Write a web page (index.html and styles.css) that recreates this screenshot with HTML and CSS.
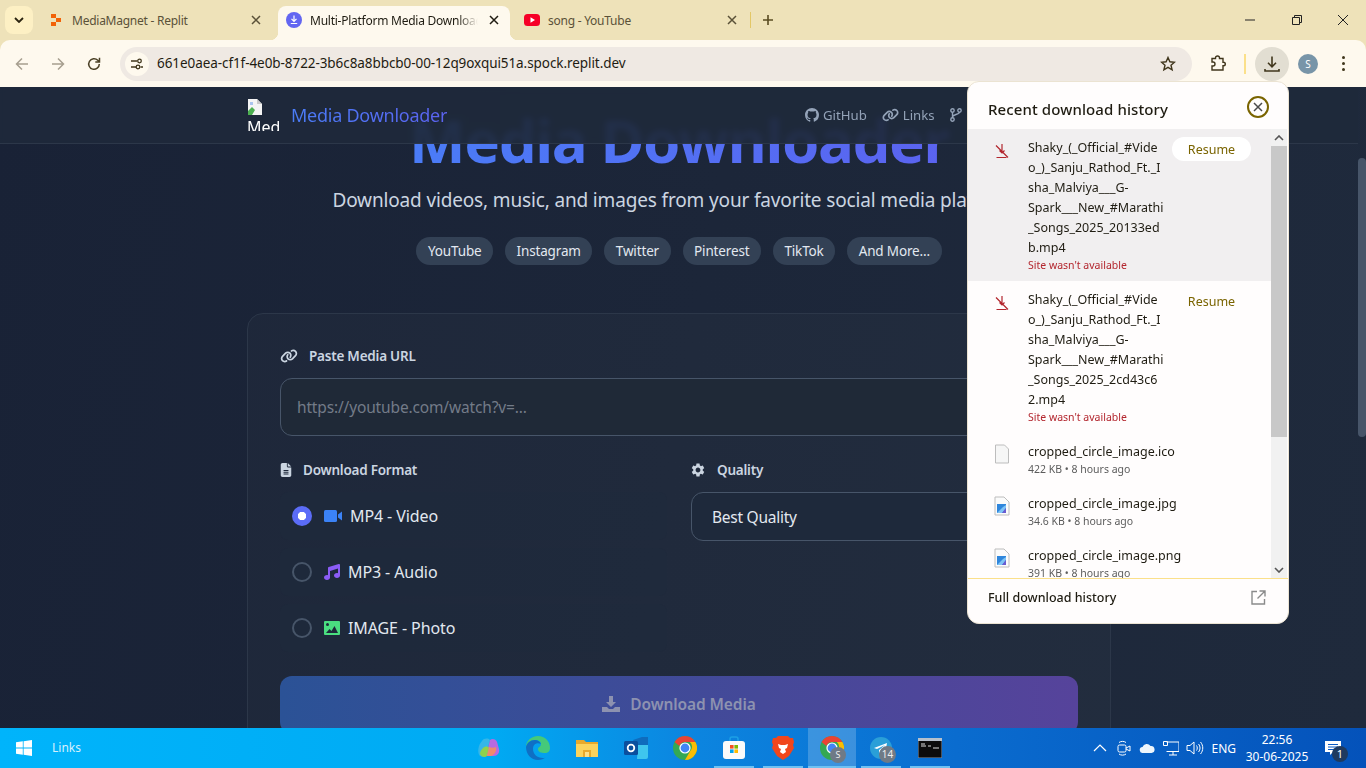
FILE: index.html
```html
<!DOCTYPE html>
<html>
<head>
    <title>Multi-Platform Media Downloader</title>
    <link rel="stylesheet" href="styles.css">
</head>
<body>
    <svg class="sprite" xmlns="http://www.w3.org/2000/svg">
        <symbol id="i-chrome" viewBox="0 0 24 24">
            <circle cx="12" cy="12" r="12" fill="#34a853"/>
            <path d="M12 0a12 12 0 0 1 10.4 6H12a6 6 0 0 0-5.6 3.9L1.6 6A12 12 0 0 1 12 0z" fill="#ea4335"/>
            <path d="M22.4 6A12 12 0 0 1 12 24l5.2-9a6 6 0 0 0-.4-9z" fill="#fbbc04"/>
            <circle cx="12" cy="12" r="5.6" fill="#fff"/>
            <circle cx="12" cy="12" r="4.4" fill="#4285f4"/>
        </symbol>
        <symbol id="i-failed" viewBox="0 0 16 16">
            <path d="M8 1v9M5.5 7.5 8 10l2.500-2.500M2.500 14.500h10M2 2.500l12 12" fill="none" stroke="#b3262e" stroke-width="1.200"/>
        </symbol>
        <symbol id="i-picfile" viewBox="0 0 16 20">
            <path d="M1 1h9l5 5v13H1z" fill="#fbfbfb" stroke="#bdbdbd"/>
            <path d="M3 8h9v9H3z" fill="#2f86dc"/>
            <path d="M3 17l6-6 3-2v3l-4 5z" fill="#7fc3f5"/>
            <path d="M8 17l4-5v5z" fill="#6a5bd0"/>
        </symbol>
        <symbol id="i-close" viewBox="0 0 12 12">
            <path d="M2 2l8 8M10 2l-8 8" fill="none" stroke="currentColor" stroke-width="1.500"/>
        </symbol>
    </svg>

    <div class="tabstrip">
        <div class="tablist-btn">
            <svg width="10" height="6" viewBox="0 0 10 6"><path d="M1 1l4 4 4-4" fill="none" stroke="#2b2410" stroke-width="1.800"/></svg>
        </div>
        <div class="tabs">
            <div class="tab">
                <svg class="favicon" viewBox="0 0 16 16"><path d="M3 2h5v4H3zM8 6h5v4H8zM3 10h5v4H3z" fill="#f26207"/></svg>
                <span class="tab-title">MediaMagnet - Replit</span>
                <svg class="tab-x"><use href="#i-close"/></svg>
            </div>
            <div class="tab tab-active">
                <svg class="favicon" viewBox="0 0 16 16"><circle cx="8" cy="8" r="8" fill="#6366f1"/><path d="M8 3.500v5.500M5.500 6.800 8 9.300l2.500-2.500M4.800 11.500h6.400" fill="none" stroke="#fff" stroke-width="1.200"/></svg>
                <span class="tab-title">Multi-Platform Media Downloader</span>
                <svg class="tab-x"><use href="#i-close"/></svg>
            </div>
            <div class="tab">
                <svg class="favicon" viewBox="0 0 16 16"><rect y="2" width="16" height="12" rx="3.500" fill="#f60026"/><path d="M6.500 5.200v5.600L11 8z" fill="#fff"/></svg>
                <span class="tab-title">song - YouTube</span>
                <svg class="tab-x"><use href="#i-close"/></svg>
            </div>
        </div>
        <div class="tab-sep"></div>
        <svg class="new-tab" viewBox="0 0 12 12"><path d="M6 1v10M1 6h10" fill="none" stroke="#5a4c22" stroke-width="1.600"/></svg>
        <div class="win-controls">
            <svg viewBox="0 0 12 12"><path d="M1 6h10" stroke="#222" fill="none"/></svg>
            <svg viewBox="0 0 12 12"><path d="M1.500 3.500h7v7h-7zM3.500 3.500v-2h7v7h-2" stroke="#222" fill="none"/></svg>
            <svg viewBox="0 0 12 12"><path d="M1 1l10 10M11 1 1 11" stroke="#222" fill="none"/></svg>
        </div>
    </div>

    <div class="toolbar">
        <div class="tool-btn">
            <svg width="16" height="16" viewBox="0 0 16 16"><path d="M14 8H2.500M8 2.500 2.500 8 8 13.500" fill="none" stroke="#a79f8f" stroke-width="1.500"/></svg>
        </div>
        <div class="tool-btn">
            <svg width="16" height="16" viewBox="0 0 16 16"><path d="M2 8h11.500M8 2.500 13.500 8 8 13.500" fill="none" stroke="#a79f8f" stroke-width="1.500"/></svg>
        </div>
        <div class="tool-btn">
            <svg width="16" height="16" viewBox="0 0 16 16"><path d="M13.300 8a5.300 5.300 0 1 1-1.500-3.700L13.500 6M13.500 1.800V6H9.300" fill="none" stroke="#4b4126" stroke-width="1.500"/></svg>
        </div>
        <div class="omnibox">
            <div class="site-chip">
                <svg width="14" height="14" viewBox="0 0 14 14"><path d="M1 4h6M10.500 10H13M1 10h5" stroke="#40361c" stroke-width="1.300" fill="none"/><circle cx="9.500" cy="4" r="1.800" fill="none" stroke="#40361c" stroke-width="1.300"/><circle cx="8" cy="10" r="1.800" fill="none" stroke="#40361c" stroke-width="1.300"/></svg>
            </div>
            <span class="url">661e0aea-cf1f-4e0b-8722-3b6c8a8bbcb0-00-12q9oxqui51a.spock.replit.dev</span>
            <svg class="star" width="16" height="16" viewBox="0 0 16 16"><path d="M8 1.500l1.900 4.300 4.600.4-3.500 3 1.100 4.600L8 11.400l-4.100 2.400L5 9.200l-3.500-3 4.600-.4z" fill="none" stroke="#40361c" stroke-width="1.400"/></svg>
        </div>
        <div class="tool-btn ext-btn">
            <svg width="18" height="18" viewBox="0 0 18 18"><path d="M3 3.500h3.500V3a2 2 0 0 1 4 0v.5H14v3.700h.5a1.800 1.800 0 0 1 0 3.600H14v4.200H3v-4h1a2 2 0 0 0 0-4H3z" fill="none" stroke="#40361c" stroke-width="1.400"/></svg>
        </div>
        <div class="tool-sep"></div>
        <div class="dl-btn">
            <svg width="18" height="18" viewBox="0 0 18 18"><path d="M9 1.500v10M5 7.800 9 11.800l4-4M2 14v2h14v-2" fill="none" stroke="#40361c" stroke-width="1.600"/></svg>
        </div>
        <div class="avatar">S</div>
        <div class="dots"><i></i><i></i><i></i></div>
    </div>

    <div class="viewport">
        <div class="page">
            <div class="hero">
                <h1>Media Downloader</h1>
                <p class="subtitle">Download videos, music, and images from your favorite social media platforms</p>
                <div class="pills">
                    <span class="pill">YouTube</span>
                    <span class="pill">Instagram</span>
                    <span class="pill">Twitter</span>
                    <span class="pill">Pinterest</span>
                    <span class="pill">TikTok</span>
                    <span class="pill">And More...</span>
                </div>
            </div>

            <div class="card">
                <label class="field-label">
                    <svg class="lbl-icon lbl-icon-link" width="18" height="14" viewBox="0 0 640 512"><path d="M579.8 267.7c56.5-56.5 56.5-148 0-204.5c-50-50-128.8-56.5-186.3-15.4l-1.6 1.1c-14.4 10.3-17.7 30.3-7.4 44.6s30.3 17.7 44.6 7.4l1.6-1.1c32.1-22.9 76-19.3 103.8 8.6c31.5 31.5 31.5 82.5 0 114L422.3 334.8c-31.5 31.5-82.5 31.5-114 0c-27.9-27.9-31.5-71.8-8.6-103.8l1.1-1.6c10.3-14.4 6.9-34.4-7.4-44.6s-34.4-6.9-44.6 7.4l-1.1 1.6C206.5 251.2 213 330 263 380c56.5 56.5 148 56.5 204.5 0L579.8 267.7zM60.2 244.3c-56.5 56.5-56.5 148 0 204.5c50 50 128.8 56.5 186.3 15.4l1.6-1.1c14.4-10.3 17.7-30.3 7.4-44.6s-30.3-17.7-44.6-7.4l-1.6 1.1c-32.1 22.9-76 19.3-103.8-8.6C74 372 74 321 105.5 289.5L217.7 177.2c31.5-31.5 82.5-31.5 114 0c27.9 27.9 31.5 71.8 8.6 103.9l-1.1 1.6c-10.3 14.4-6.9 34.4 7.4 44.6s34.4 6.9 44.6-7.4l1.1-1.6C433.5 260.8 427 182 377 132c-56.5-56.5-148-56.5-204.5 0L60.2 244.3z" fill="#cbd5e1"/></svg>
                    Paste Media URL
                </label>
                <div class="url-input">https://youtube.com/watch?v=...</div>

                <div class="form-grid">
                    <div>
                        <label class="field-label">
                            <svg class="lbl-icon lbl-icon-file" width="12" height="14" viewBox="0 0 384 512"><path d="M64 0C28.7 0 0 28.7 0 64V448c0 35.3 28.7 64 64 64H320c35.3 0 64-28.7 64-64V160H256c-17.7 0-32-14.3-32-32V0H64zM256 0V128H384L256 0zM112 256H272c8.8 0 16 7.2 16 16s-7.2 16-16 16H112c-8.8 0-16-7.2-16-16s7.2-16 16-16zm0 64H272c8.8 0 16 7.2 16 16s-7.2 16-16 16H112c-8.8 0-16-7.2-16-16s7.2-16 16-16zm0 64H272c8.8 0 16 7.2 16 16s-7.2 16-16 16H112c-8.8 0-16-7.2-16-16s7.2-16 16-16z" fill="#cbd5e1"/></svg>
                            Download Format
                        </label>
                        <div class="options">
                            <div class="option">
                                <span class="radio radio-on"></span>
                                <svg class="opt-icon" width="18" height="14" viewBox="0 0 18 14"><rect y="1" width="13" height="12" rx="1.500" fill="#3b82f6"/><path d="M14 5.500 18 2.500v9l-4-3z" fill="#3b82f6"/></svg>
                                <span>MP4 - Video</span>
                            </div>
                            <div class="option">
                                <span class="radio"></span>
                                <svg class="opt-icon" width="16" height="16" viewBox="0 0 512 512"><path d="M499.1 6.3c8.1 6 12.9 15.6 12.9 25.7v72V368c0 44.2-43 80-96 80s-96-35.8-96-80s43-80 96-80c11.2 0 22 1.6 32 4.6V147L192 223.8V432c0 44.2-43 80-96 80s-96-35.8-96-80s43-80 96-80c11.2 0 22 1.6 32 4.6V200 128c0-14.1 9.3-26.6 22.8-30.7l320-96c9.7-2.9 20.2-1.1 28.3 4.9z" fill="#8b5cf6"/></svg>
                                <span>MP3 - Audio</span>
                            </div>
                            <div class="option">
                                <span class="radio"></span>
                                <svg class="opt-icon" width="16" height="14" viewBox="0 0 16 14"><rect width="16" height="14" rx="1" fill="#4ade80"/><circle cx="3.500" cy="3.500" r="1.500" fill="#1e293b"/><path d="M2 12l3.500-4 2 2 3-5 3.500 7z" fill="#1e293b"/></svg>
                                <span>IMAGE - Photo</span>
                            </div>
                        </div>
                    </div>
                    <div>
                        <label class="field-label">
                            <svg class="lbl-icon lbl-icon-gear" width="16" height="16" viewBox="0 0 24 24"><path d="M19.14 12.94c.04-.3.06-.61.06-.94 0-.32-.02-.64-.07-.94l2.03-1.58a.49.49 0 00.12-.61l-1.92-3.32a.488.488 0 00-.59-.22l-2.39.96c-.5-.38-1.03-.7-1.62-.94l-.36-2.54a.484.484 0 00-.48-.41h-3.84c-.24 0-.43.17-.47.41l-.36 2.54c-.59.24-1.13.57-1.62.94l-2.39-.96c-.22-.08-.47 0-.59.22L2.74 8.87c-.12.21-.08.47.12.61l2.03 1.58c-.05.3-.09.63-.09.94s.02.64.07.94l-2.03 1.58a.49.49 0 00-.12.61l1.92 3.32c.12.22.37.29.59.22l2.39-.96c.5.38 1.03.7 1.62.94l.36 2.54c.05.24.24.41.48.41h3.84c.24 0 .44-.17.47-.41l.36-2.54c.59-.24 1.13-.56 1.62-.94l2.39.96c.22.08.47 0 .59-.22l1.92-3.32c.12-.22.07-.47-.12-.61l-2.01-1.58zM12 15.6c-1.98 0-3.6-1.62-3.6-3.6s1.62-3.6 3.6-3.6 3.6 1.62 3.6 3.6-1.62 3.6-3.6 3.6z" fill="#cbd5e1"/></svg>
                            Quality
                        </label>
                        <div class="select">Best Quality</div>
                    </div>
                </div>

                <div class="submit">
                    <svg width="18" height="16" viewBox="0 0 18 16"><path d="M7 0h4v6h3l-5 5-5-5h3z" fill="#8d92b0"/><path d="M0 11h5l2 2h4l2-2h5v5H0z" fill="#8d92b0"/></svg>
                    Download Media
                </div>
            </div>
        </div>
        <div class="page-scroll"><div class="page-thumb"></div></div>

        <nav class="topnav">
            <div class="topnav-inner">
                <div class="broken-img">
                    <svg width="16" height="16" viewBox="0 0 16 16"><path d="M1 0h9l5 5v11H1z" fill="#f4f4f4"/><path d="M10 0v5h5z" fill="#c8c8c8"/><path d="M1 16V12l4-4 3 3-3 5z" fill="#4caf50"/><path d="M3 3h3v3H3z" fill="#aac4ee"/></svg>
                    <span>Media Downloader</span>
                </div>
                <span class="brand">Media Downloader</span>
                <div class="nav-links">
                    <a>
                        <svg width="14" height="14" viewBox="0 0 16 16"><path d="M8 0C3.58 0 0 3.58 0 8c0 3.54 2.29 6.53 5.47 7.59.4.07.55-.17.55-.38 0-.19-.01-.82-.01-1.49-2.01.37-2.53-.49-2.69-.94-.09-.23-.48-.94-.82-1.13-.28-.15-.68-.52-.01-.53.63-.01 1.08.58 1.23.82.72 1.21 1.87.87 2.33.66.07-.52.28-.87.51-1.07-1.78-.2-3.64-.89-3.64-3.95 0-.87.31-1.59.82-2.15-.08-.2-.36-1.02.08-2.12 0 0 .67-.21 2.2.82.64-.18 1.32-.27 2-.27.68 0 1.36.09 2 .27 1.53-1.04 2.2-.82 2.2-.82.44 1.1.16 1.92.08 2.12.51.56.82 1.27.82 2.15 0 3.07-1.87 3.75-3.65 3.95.29.25.54.73.54 1.48 0 1.07-.01 1.93-.01 2.2 0 .21.15.46.55.38A8.013 8.013 0 0016 8c0-4.42-3.58-8-8-8z" fill="#94a3b8"/></svg>
                        GitHub
                    </a>
                    <a>
                        <svg width="17" height="14" viewBox="0 0 640 512"><path d="M579.8 267.7c56.5-56.5 56.5-148 0-204.5c-50-50-128.8-56.5-186.3-15.4l-1.6 1.1c-14.4 10.3-17.7 30.3-7.4 44.6s30.3 17.7 44.6 7.4l1.6-1.1c32.1-22.9 76-19.3 103.8 8.6c31.5 31.5 31.5 82.5 0 114L422.3 334.8c-31.5 31.5-82.5 31.5-114 0c-27.9-27.9-31.5-71.8-8.6-103.8l1.1-1.6c10.3-14.4 6.9-34.4-7.4-44.6s-34.4-6.9-44.6 7.4l-1.1 1.6C206.5 251.2 213 330 263 380c56.5 56.5 148 56.5 204.5 0L579.8 267.7zM60.2 244.3c-56.5 56.5-56.5 148 0 204.5c50 50 128.8 56.5 186.3 15.4l1.6-1.1c14.4-10.3 17.7-30.3 7.4-44.6s-30.3-17.7-44.6-7.4l-1.6 1.1c-32.1 22.9-76 19.3-103.8-8.6C74 372 74 321 105.5 289.5L217.7 177.2c31.5-31.5 82.5-31.5 114 0c27.9 27.9 31.5 71.8 8.6 103.9l-1.1 1.6c-10.3 14.4-6.9 34.4 7.4 44.6s34.4 6.9 44.6-7.4l1.1-1.6C433.5 260.8 427 182 377 132c-56.5-56.5-148-56.5-204.5 0L60.2 244.3z" fill="#94a3b8"/></svg>
                        Links
                    </a>
                    <a>
                        <svg width="12" height="14" viewBox="0 0 12 14"><circle cx="2.500" cy="2.500" r="1.700" fill="none" stroke="#94a3b8" stroke-width="1.400"/><circle cx="9.500" cy="2.500" r="1.700" fill="none" stroke="#94a3b8" stroke-width="1.400"/><circle cx="2.500" cy="11.500" r="1.700" fill="none" stroke="#94a3b8" stroke-width="1.400"/><path d="M2.500 4v6M9.500 4c0 3-7 2-7 5" fill="none" stroke="#94a3b8" stroke-width="1.400"/></svg>
                    </a>
                </div>
            </div>
        </nav>
    </div>

    <div class="dl-popup">
        <div class="popup-head">
            <span>Recent download history</span>
            <div class="popup-close"><svg width="12" height="12"><use href="#i-close"/></svg></div>
        </div>
        <div class="popup-body">
            <div class="dl-list">
                <div class="dl-item dl-item-hover">
                    <svg class="dl-icon" width="16" height="16"><use href="#i-failed"/></svg>
                    <div class="dl-text">
                        <div class="dl-name">Shaky_(_Official_#Vide<br>o_)_Sanju_Rathod_Ft._I<br>sha_Malviya___G-<br>Spark___New_#Marathi<br>_Songs_2025_20133ed<br>b.mp4</div>
                        <div class="dl-status">Site wasn't available</div>
                    </div>
                    <span class="resume resume-pill">Resume</span>
                </div>
                <div class="dl-item">
                    <svg class="dl-icon" width="16" height="16"><use href="#i-failed"/></svg>
                    <div class="dl-text">
                        <div class="dl-name">Shaky_(_Official_#Vide<br>o_)_Sanju_Rathod_Ft._I<br>sha_Malviya___G-<br>Spark___New_#Marathi<br>_Songs_2025_2cd43c6<br>2.mp4</div>
                        <div class="dl-status">Site wasn't available</div>
                    </div>
                    <span class="resume">Resume</span>
                </div>
                <div class="dl-item dl-file">
                    <svg class="dl-icon" width="16" height="20" viewBox="0 0 16 20"><path d="M1.500 1h9l4 4v14h-13z" fill="#f6f6f6" stroke="#bdbdbd"/></svg>
                    <div class="dl-text">
                        <div class="dl-name">cropped_circle_image.ico</div>
                        <div class="dl-meta">422 KB • 8 hours ago</div>
                    </div>
                </div>
                <div class="dl-item dl-file">
                    <svg class="dl-icon" width="16" height="20"><use href="#i-picfile"/></svg>
                    <div class="dl-text">
                        <div class="dl-name">cropped_circle_image.jpg</div>
                        <div class="dl-meta">34.6 KB • 8 hours ago</div>
                    </div>
                </div>
                <div class="dl-item dl-file">
                    <svg class="dl-icon" width="16" height="20"><use href="#i-picfile"/></svg>
                    <div class="dl-text">
                        <div class="dl-name">cropped_circle_image.png</div>
                        <div class="dl-meta">391 KB • 8 hours ago</div>
                    </div>
                </div>
            </div>
            <div class="popup-scroll">
                <div class="scroll-arrow"><svg width="10" height="6" viewBox="0 0 10 6"><path d="M1 5l4-4 4 4" fill="none" stroke="#555" stroke-width="1.600"/></svg></div>
                <div class="scroll-thumb"></div>
                <div class="scroll-rest"></div>
                <div class="scroll-arrow"><svg width="10" height="6" viewBox="0 0 10 6"><path d="M1 1l4 4 4-4" fill="none" stroke="#555" stroke-width="1.600"/></svg></div>
            </div>
        </div>
        <div class="popup-foot">
            <span>Full download history</span>
            <svg width="15" height="15" viewBox="0 0 15 15"><path d="M6 1.500H1v12.500h12.500V9M8.500 1h5.500v5.500M14 1 6.500 8.500" fill="none" stroke="#8a8a8a" stroke-width="1.400"/></svg>
        </div>
    </div>

    <div class="taskbar">
        <svg class="win-logo" width="16" height="16" viewBox="0 0 16 16"><path d="M0 2.300 6.800 1.300v6.300H0zM7.600 1.200 16 0v7.600H7.600zM0 8.400h6.800v6.300L0 13.700zM7.600 8.400H16V16l-8.400-1.200z" fill="#fff"/></svg>
        <span class="task-links">Links</span>
        <div class="task-icons">
            <div class="task-app">
                <svg width="24" height="24" viewBox="0 0 24 24"><path d="M5 5c2-3 6-3 8-1l-4 15c-1 2-4 2-6 1-3-3-2-11 2-15z" fill="#35b6e8"/><path d="M13 4c2-2 6-1 7 2l2 7c1 4-2 7-5 7H9l4-16z" fill="#b86ae0"/><path d="M6 12c2-2 5-2 6 0l-2 8c-2 2-6 1-7-2 0-2 1-4 3-6z" fill="#8fd14f"/><path d="M12 11c2 1 5 1 7 0 1 3-1 8-5 9h-4z" fill="#f08a6c"/></svg>
            </div>
            <div class="task-app">
                <svg width="24" height="24" viewBox="0 0 24 24"><path d="M12 0c7 0 12 5 12 12 0 3-2 5-5 5-4 0-7-1-7-4 0-2 3-2 3-5 0-2-2-4-6-4C4 4 1 7 0 11 0 5 5 0 12 0z" fill="#45c97a"/><path d="M0 11c1-4 4-7 9-7 3 0 5 2 6 4-4-2-8 0-8 5 0 5 4 9 10 9 1 0 2 0 3-1-2 2-5 3-8 3C5 24 0 18 0 11z" fill="#0f6fc4"/></svg>
            </div>
            <div class="task-app">
                <svg width="22" height="18" viewBox="0 0 22 18"><path d="M0 1h8l2 2h12v15H0z" fill="#e8a92c"/><path d="M0 5h22v13H0z" fill="#fbd35c"/><path d="M7 11h8v7H7z" fill="#e8a92c"/><path d="M9 13h4v5H9z" fill="#fbe08a"/></svg>
            </div>
            <div class="task-app">
                <svg width="24" height="22" viewBox="0 0 24 22"><path d="M9 3l9-3h6v14h-9z" fill="#0f6cbd"/><path d="M14 8h10v12a2 2 0 0 1-2 2H13z" fill="#3fc6ee"/><rect y="4" width="14" height="14" rx="1.500" fill="#0b4f9e"/><circle cx="7" cy="11" r="3.300" fill="none" stroke="#fff" stroke-width="1.800"/></svg>
            </div>
            <div class="task-app">
                <svg width="24" height="24"><use href="#i-chrome"/></svg>
            </div>
            <div class="task-app task-open">
                <svg width="24" height="24" viewBox="0 0 24 24"><path d="M8 6V3a2 2 0 0 1 2-2h4a2 2 0 0 1 2 2v3" fill="none" stroke="#1ca0e6" stroke-width="1.500"/><rect x="1" y="5" width="22" height="18" rx="3" fill="#fafafa"/><path d="M8 9h3.600v3.600H8z" fill="#f25022"/><path d="M12.400 9H16v3.600h-3.600z" fill="#7fba00"/><path d="M8 13.400h3.600V17H8z" fill="#00a4ef"/><path d="M12.400 13.400H16V17h-3.600z" fill="#ffb900"/></svg>
            </div>
            <div class="task-app task-open">
                <svg width="22" height="24" viewBox="0 0 22 24"><path d="M6 0h10l2 2 3 0 1 4-1 3 1 3-5 8-6 4-6-4-5-8 1-3-1-3 1-4 3 0z" fill="#f1461c"/><path d="M6 8l3 1h4l3-1-1 4-2 1 1 3-3 2-3-2 1-3-2-1z" fill="#fff"/></svg>
            </div>
            <div class="task-app task-open task-active">
                <svg width="24" height="24"><use href="#i-chrome"/></svg>
                <span class="task-badge">S</span>
            </div>
            <div class="task-app task-open">
                <svg width="22" height="22" viewBox="0 0 22 22"><circle cx="11" cy="11" r="11" fill="#2a9fd8"/><path d="M4 11l13-5-2 11-4-3-2 2v-3l6-5-8 4z" fill="#fff"/></svg>
                <span class="task-badge task-badge-num">14</span>
            </div>
            <div class="task-app task-open">
                <svg width="24" height="20" viewBox="0 0 24 20"><rect width="24" height="20" fill="#0c0c0c" stroke="#8a97a8"/><rect width="24" height="3" fill="#b6c0cc"/><path d="M3 6h4M3 8h5M10 8h3M15 10h6" stroke="#ddd" fill="none"/></svg>
            </div>
        </div>
        <div class="tray">
            <svg class="tray-caret" width="14" height="8" viewBox="0 0 14 8"><path d="M1 7l6-6 6 6" fill="none" stroke="#fff" stroke-width="1.200"/></svg>
            <svg class="tray-meet" width="16" height="16" viewBox="0 0 16 16"><rect x="2" y="5" width="8" height="7" rx="1.500" fill="none" stroke="#fff"/><path d="M10 8l4-2v5l-4-2M3 2.500c2-1.500 5-1.500 7 0M3 14c2 1.500 5 1.500 7 0" fill="none" stroke="#fff"/></svg>
            <svg class="tray-cloud" width="16" height="10" viewBox="0 0 16 10"><path d="M4 10a3 3 0 0 1-.5-6A4.500 4.500 0 0 1 11.500 3 3.500 3.500 0 0 1 12.500 10z" fill="#eef6fc"/></svg>
            <svg class="tray-net" width="16" height="16" viewBox="0 0 16 16"><path d="M3.500 2H16v9.500H3.500M10 11.500V15M6 15h8M.5 1.500h4v4h-4z" fill="none" stroke="#fff"/></svg>
            <svg class="tray-vol" width="18" height="14" viewBox="0 0 18 14"><path d="M1 4.500h3L8 1v12L4 9.500H1zM10.500 4.500c1 1.500 1 3.500 0 5M12.500 3c2 2.500 2 5.500 0 8M14.500 1c3 3.500 3 8.500 0 12" fill="none" stroke="#fff"/></svg>
            <span class="tray-lang">ENG</span>
            <div class="tray-clock"><span>22:56</span><span>30-06-2025</span></div>
            <div class="tray-notify">
                <svg width="16" height="15" viewBox="0 0 16 15"><path d="M0 0h16v11H8l-3 3v-3H0z" fill="#fff"/><path d="M3 3.500h10M3 6h10M3 8.500h6" stroke="#0a5ac4"/></svg>
                <span class="notify-badge">1</span>
            </div>
        </div>
    </div>
</body>
</html>
```

FILE: styles.css
```css
* { box-sizing: border-box; }
html, body { margin: 0; height: 100%; overflow: hidden; }
body { position: relative; display: flex; flex-direction: column; width: 1366px; height: 768px; font-family: "Noto Sans", "Open Sans", sans-serif; background: #eee2b9; }
.sprite { display: none; }

/* browser tab strip */
.tabstrip { height: 40px; flex: none; display: flex; align-items: flex-start; padding-left: 5px; background: #eee2b9; }
.tablist-btn { width: 28px; height: 28px; margin-top: 6px; border-radius: 8px; background: #fdf0c4; display: flex; align-items: center; justify-content: center; }
.tabs { display: flex; gap: 6px; margin-left: 7px; }
.tab { position: relative; width: 232px; height: 34px; margin-top: 6px; padding: 0 8px 6px; display: flex; align-items: center; gap: 8px; font-size: 12px; color: #5a5138; letter-spacing: -.25px; border-radius: 8px 8px 0 0; }
.tab-active { background: #fef9ee; color: #1f1c12; }
.tab-active::before, .tab-active::after { content: ""; position: absolute; bottom: 0; width: 8px; height: 8px; }
.tab-active::before { left: -8px; background: radial-gradient(circle at 0 0, transparent 8px, #fef9ee 8.5px); }
.tab-active::after { right: -8px; background: radial-gradient(circle at 100% 0, transparent 8px, #fef9ee 8.5px); }
.favicon { width: 16px; height: 16px; flex: none; }
.tab-title { flex: 1; white-space: nowrap; overflow: hidden; min-width: 0; }
.tab-active .tab-title { -webkit-mask-image: linear-gradient(90deg, #000 88%, transparent 100%); mask-image: linear-gradient(90deg, #000 88%, transparent 100%); }
.tab-x { width: 12px; height: 12px; flex: none; margin: 0 2px; color: #5a5138; }
.tab-active .tab-x { color: #1f1c12; }
.tab-sep { width: 1px; height: 16px; margin: 12px 0 0 2px; background: #e3c766; }
.new-tab { width: 12px; height: 12px; margin: 14px 0 0 11px; }
.win-controls { margin-left: auto; display: flex; padding-top: 14px; }
.win-controls svg { width: 12px; height: 12px; margin-right: 34.5px; }
.win-controls svg:last-child { margin-right: 17px; }

/* browser toolbar */
.toolbar { height: 47px; flex: none; display: flex; align-items: center; padding-left: 4px; background: #fef9ee; border-radius: 10px 10px 0 0; }
.tool-btn { width: 36px; height: 34px; flex: none; display: flex; align-items: center; justify-content: center; }
.omnibox { width: 1072px; height: 34px; margin-left: 8px; border-radius: 17px; background: #efe9e3; display: flex; align-items: center; padding: 0 16px 0 5px; }
.site-chip { width: 24px; height: 24px; border-radius: 50%; background: #fef9ee; display: flex; align-items: center; justify-content: center; }
.url { margin-left: 8px; padding-bottom: 2px; font-size: 13.5px; color: #1f1c12; letter-spacing: -.07px; white-space: nowrap; }
.star { margin-left: auto; }
.ext-btn { margin-left: 8px; width: 36px; }
.tool-sep { width: 2px; height: 20px; margin-left: 8px; background: #fbe08a; }
.dl-btn { width: 34px; height: 34px; margin-left: 9px; border-radius: 17px; background: #e2ded2; display: flex; align-items: center; justify-content: center; }
.avatar { width: 20px; height: 20px; margin-left: 9px; border-radius: 50%; background: #7895a8; color: #fff; font-size: 10px; display: flex; align-items: center; justify-content: center; }
.dots { margin-left: 24px; display: flex; flex-direction: column; gap: 3px; }
.dots i { width: 3px; height: 3px; border-radius: 50%; background: #40361c; }

/* the web page */
.viewport { position: relative; flex: 1; min-height: 0; display: flex; overflow: hidden; background: linear-gradient(100deg, #192236, #1f2a3c); }
.page { flex: 1; min-width: 0; }
.page-scroll { width: 8px; padding-top: 71px; }
.page-thumb { height: 279px; background: #475569; border-radius: 4px; }

.topnav { position: absolute; top: 0; left: 0; right: 8px; height: 57px; background: rgba(30, 41, 59, .92); backdrop-filter: blur(3px); border-bottom: 1px solid #2c3749; }
.topnav-inner { width: 864px; height: 56px; margin: 0 auto; display: flex; align-items: center; }
.broken-img { width: 32px; height: 32px; overflow: hidden; color: #fff; font-size: 16px; line-height: 24px; }
.broken-img svg { display: block; }
.brand { margin-left: 12px; font-size: 18px; letter-spacing: -.25px; background: linear-gradient(90deg, #4a7cf7, #5b63f0); -webkit-background-clip: text; background-clip: text; color: transparent; }
.nav-links { width: 306px; margin-left: auto; display: flex; gap: 15px; font-size: 13.2px; color: #94a3b8; white-space: nowrap; }
.nav-links a { display: flex; align-items: center; gap: 4px; }

.hero { text-align: center; padding-top: 23px; }
.hero h1 { width: max-content; margin: 0 auto; font-size: 60px; line-height: 60px; font-weight: 700; letter-spacing: -1.4px; background: linear-gradient(90deg, #4a7cf7, #5b63f0); -webkit-background-clip: text; background-clip: text; color: transparent; }
.subtitle { margin: 16px 0 0; font-size: 19px; letter-spacing: -.15px; line-height: 28px; color: #cbd5e1; }
.pills { margin-top: 23px; display: flex; justify-content: center; gap: 12px; }
.pill { height: 28px; padding: 0 11.5px; border-radius: 14px; background: #334155; color: #e2e8f0; font-size: 13.5px; letter-spacing: -.15px; line-height: 28px; }

.card { width: 864px; height: 500px; margin: 48px auto 0; padding: 32px; border: 1px solid #2c3749; border-radius: 16px; background: rgba(255, 255, 255, .018); }
.field-label { height: 20px; padding-bottom: 1px; display: flex; align-items: center; font-size: 13.5px; letter-spacing: -.23px; font-weight: 600; color: #cbd5e1; }
.lbl-icon { margin-right: 12px; flex: none; }
.lbl-icon-link { margin-right: 11px; }
.lbl-icon-file { margin-right: 11px; }
.lbl-icon-gear { margin: 0 11px 0 -1px; }
.url-input { height: 58px; margin-top: 12px; padding: 0 16px; border: 1px solid #475569; border-radius: 12px; background: #1f2937; color: #737b88; font-size: 15.5px; letter-spacing: -.15px; line-height: 56px; }
.form-grid { margin-top: 24px; display: grid; grid-template-columns: 1fr 1fr; gap: 24px; }
.options { margin-top: 12px; display: flex; flex-direction: column; gap: 8px; }
.option { height: 48px; padding: 0 12px; display: flex; align-items: center; border-radius: 8px; background: rgba(30, 41, 59, .5); color: #e2e8f0; font-size: 16px; letter-spacing: -.1px; }
.radio { width: 20px; height: 20px; border-radius: 50%; border: 2px solid #475569; flex: none; margin-right: 12px; }
.radio-on { border: 0; background: radial-gradient(circle, #fff 0 4px, #5b6cf7 4.5px); }
.opt-icon { margin-right: 8px; flex: none; }
.select { height: 49px; margin-top: 12px; padding: 0 20px; border: 1px solid #475569; border-radius: 12px; background: #1e293b; color: #e2e8f0; font-size: 15.5px; letter-spacing: -.25px; line-height: 48px; }
.submit { height: 58px; margin-top: 24px; padding-bottom: 2px; display: flex; align-items: center; justify-content: center; gap: 10px; border-radius: 12px; background: linear-gradient(90deg, #2b5296, #56439b); color: #8d92b0; font-size: 15.5px; letter-spacing: -.1px; font-weight: 600; }

/* downloads bubble */
.dl-popup { position: absolute; top: 81px; left: 967px; width: 322px; height: 543px; display: flex; flex-direction: column; background: #fffdfd; border: 1px solid #ebe3d2; border-radius: 12px; overflow: hidden; color: #1f1c12; }
.popup-head { height: 47px; flex: none; display: flex; align-items: center; justify-content: space-between; padding: 7px 19px 0 20px; font-size: 15px; letter-spacing: .1px; font-weight: 500; }
.popup-close { width: 22px; height: 22px; margin-top: -5px; border: 2px solid #7a6400; border-radius: 50%; display: flex; align-items: center; justify-content: center; color: #4a4a4a; }
.popup-body { flex: 1; min-height: 0; display: flex; border-bottom: 1px solid #fbe08a; }
.dl-list { flex: 1; min-width: 0; overflow: hidden; }
.popup-scroll { width: 16px; flex: none; margin-right: 1px; background: #f1f1f1; display: flex; flex-direction: column; }
.scroll-arrow { height: 17px; flex: none; display: flex; align-items: center; justify-content: center; }
.scroll-thumb { height: 291px; background: #c8c8c8; }
.scroll-rest { flex: 1; }
.dl-item { display: flex; padding: 9px 0 8px 26px; height: 152px; }
.dl-item-hover { background: #f1eff0; }
.dl-icon { flex: none; margin-top: 5px; margin-right: 18px; }
.dl-text { width: 144px; flex: none; }
.dl-name { font-size: 12.5px; line-height: 20px; }
.dl-status { font-size: 10.5px; line-height: 16px; margin-top: -1px; color: #b3262e; }
.dl-meta { font-size: 10.5px; line-height: 16px; margin-top: -1px; color: #5c5c5c; }
.resume { width: 79px; height: 24px; margin-top: -1px; flex: none; text-align: center; line-height: 26px; font-size: 12.5px; color: #7a6400; border-radius: 12px; }
.resume-pill { background: #fff; }
.dl-file { height: 52px; }
.dl-file .dl-icon { margin-top: 2px; }
.popup-foot { height: 44px; flex: none; display: flex; align-items: center; justify-content: space-between; padding: 0 22px 8px 20px; font-size: 12.5px; font-weight: 500; }

/* windows taskbar */
.taskbar { height: 40px; flex: none; display: flex; align-items: center; background: linear-gradient(90deg, #00b4fb 0, #00aaf3 36%, #0c86e0 50%, #0a6ccf 70%, #0452ba 100%); color: #fff; }
.win-logo { margin-left: 16px; }
.task-links { margin-left: 20px; padding-bottom: 2px; font-size: 12px; color: #d6f0fd; }
.task-icons { position: absolute; left: 465px; bottom: 0; height: 40px; display: flex; gap: 1px; }
.task-app { position: relative; width: 48px; height: 40px; display: flex; align-items: center; justify-content: center; }
.task-open::after { content: ""; position: absolute; left: 4px; right: 4px; bottom: 0; height: 2px; background: #6fc1f2; }
.task-active { background: rgba(255, 255, 255, .2); }
.task-active::after { left: 0; right: 0; }
.task-badge { position: absolute; right: 10px; bottom: 5px; width: 16px; height: 16px; border-radius: 50%; background: #6f7a86; color: #eee; font-size: 9px; line-height: 16px; text-align: center; }
.task-badge-num { right: 9px; width: 17px; height: 17px; font-size: 10px; line-height: 17px; }
.tray { position: absolute; right: 0; bottom: 0; height: 40px; display: flex; align-items: center; font-size: 12px; }
.tray-caret { margin-right: 9px; }
.tray-meet { margin-right: 7px; }
.tray-cloud { margin-right: 8px; }
.tray-net { margin-right: 7px; }
.tray-vol { margin-right: 7px; }
.tray-lang { margin-right: 8px; }
.tray-clock { width: 66px; display: flex; flex-direction: column; align-items: center; line-height: 17px; }
.tray-notify { position: relative; width: 56px; padding-left: 15px; display: flex; align-items: center; }
.notify-badge { position: absolute; left: 22px; top: 5px; width: 16px; height: 16px; border-radius: 50%; background: #1f3a5f; font-size: 11px; line-height: 16px; text-align: center; }
```
